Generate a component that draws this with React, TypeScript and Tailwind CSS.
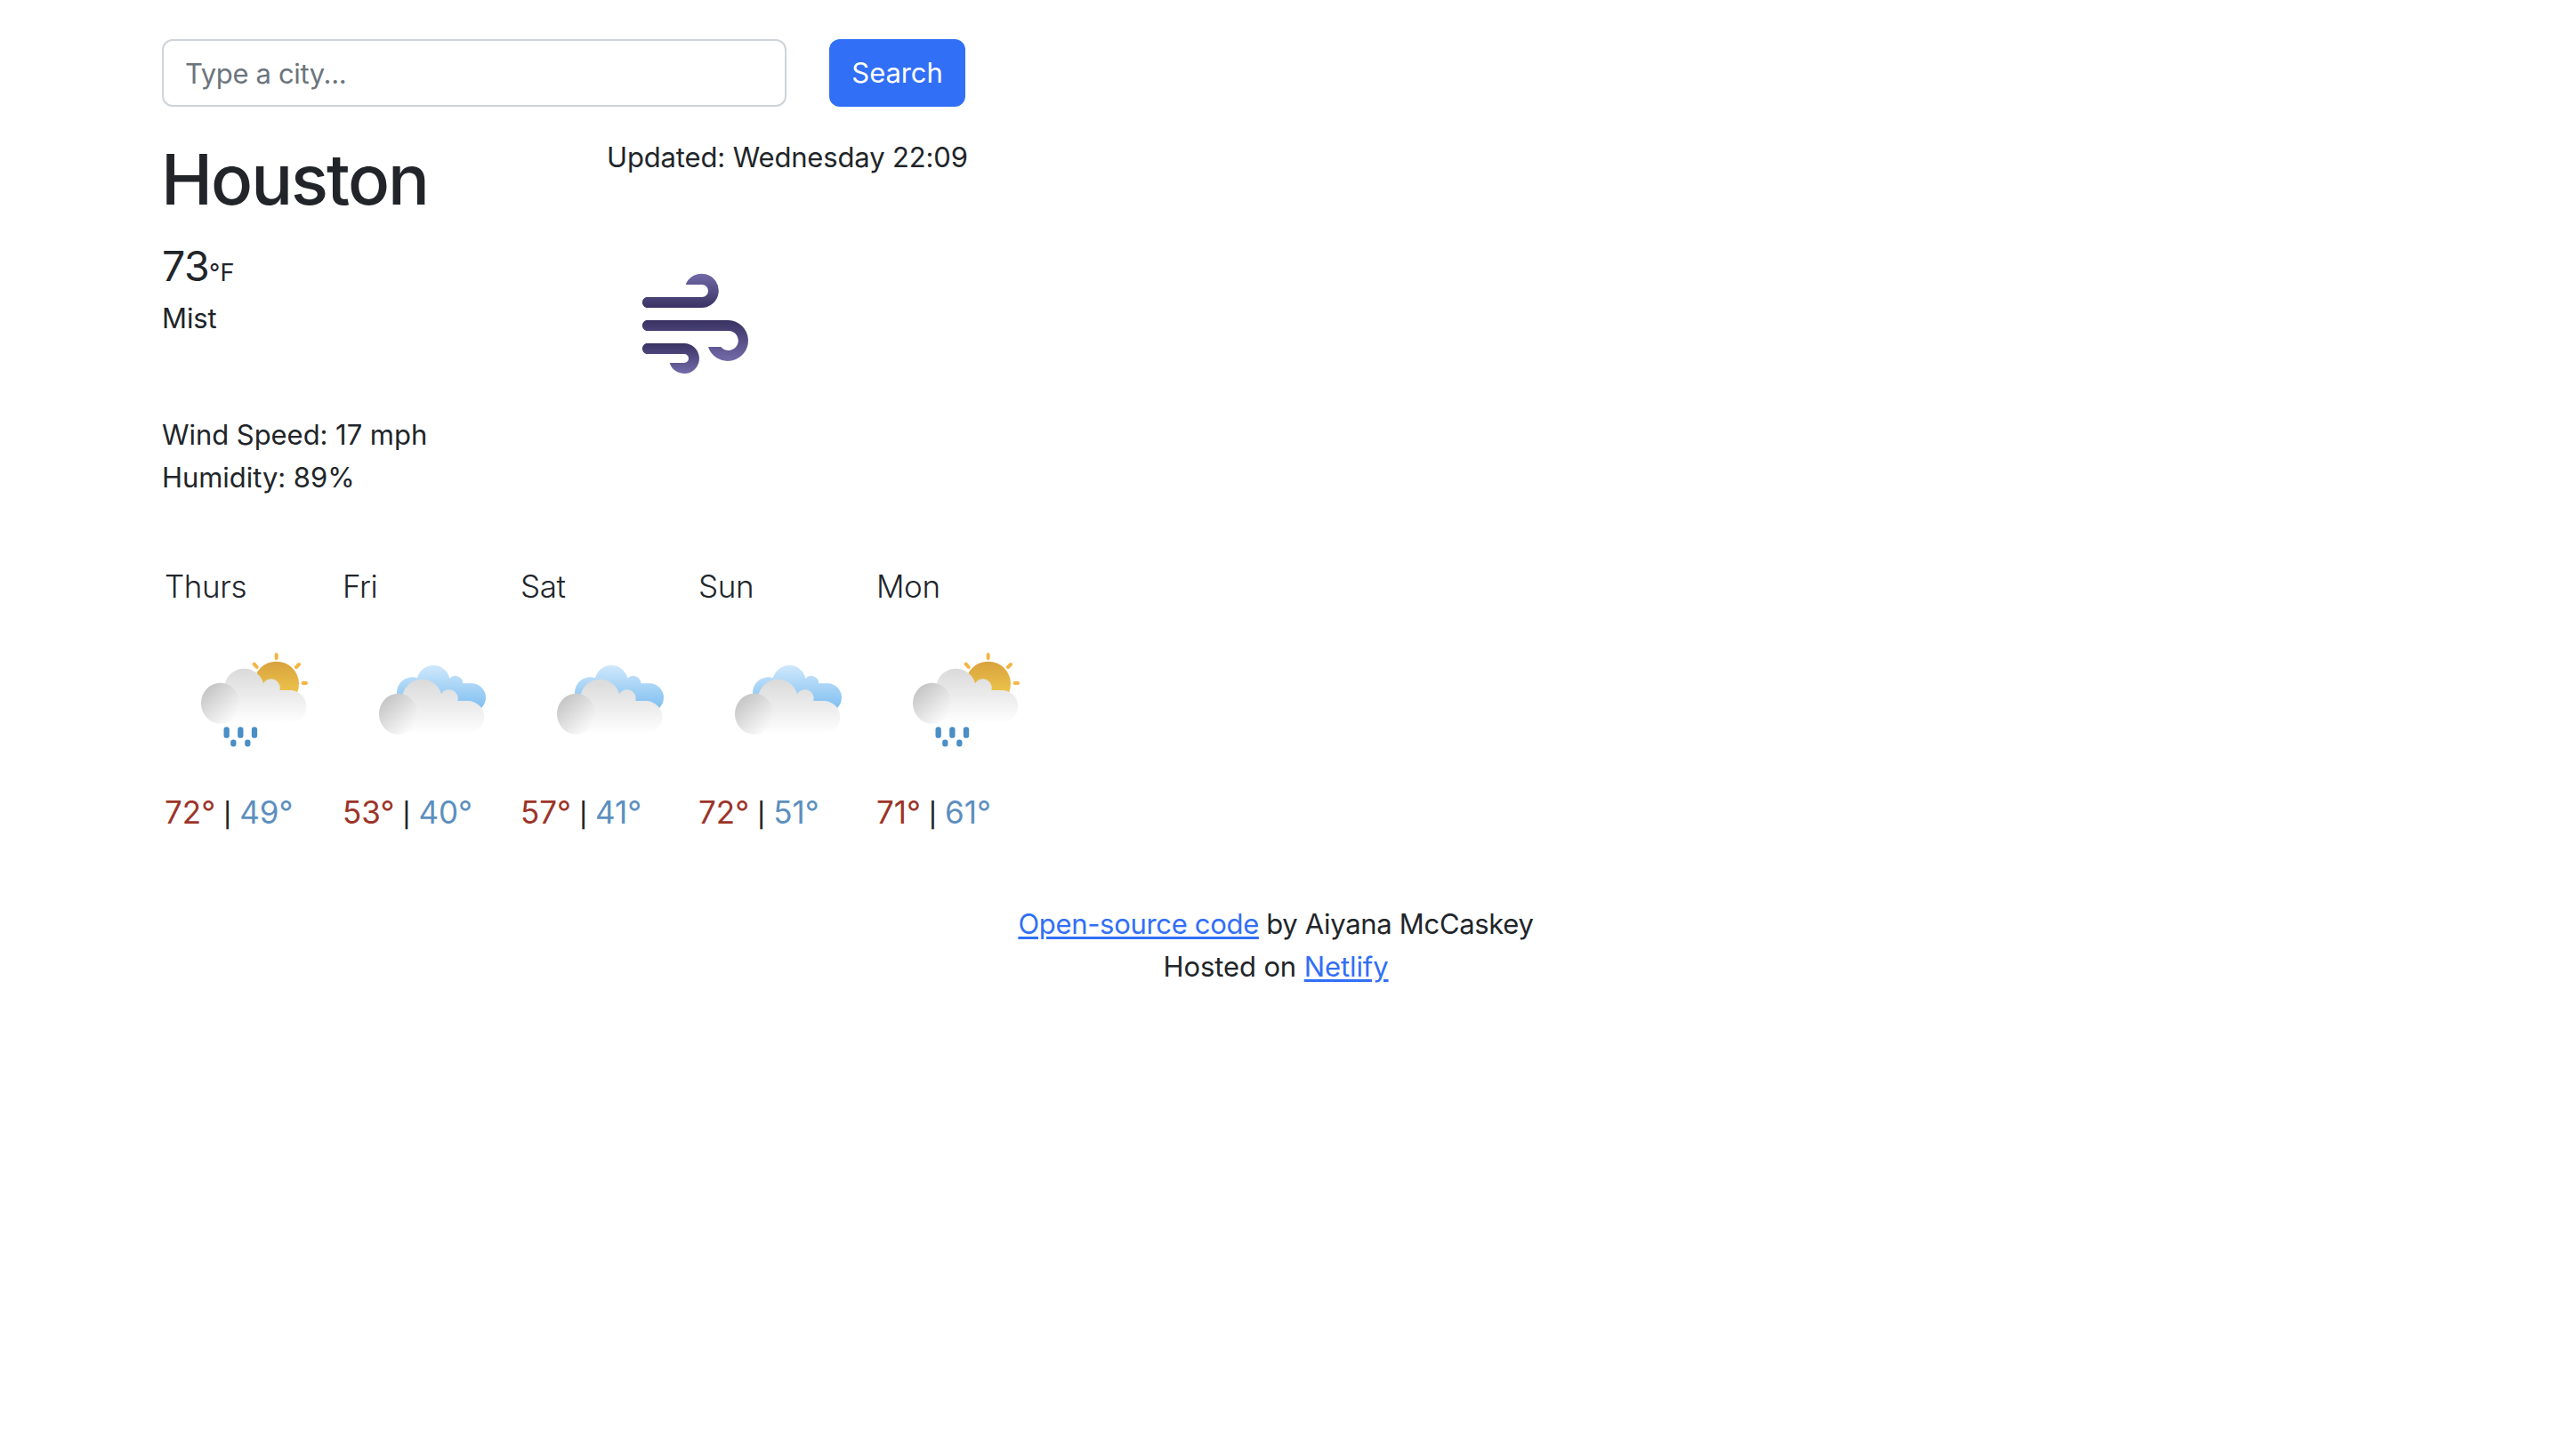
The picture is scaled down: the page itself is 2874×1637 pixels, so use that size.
const forecast = [
  { day: "Thurs", icon: "rain", high: 72, low: 49 },
  { day: "Fri", icon: "clouds", high: 53, low: 40 },
  { day: "Sat", icon: "clouds", high: 57, low: 41 },
  { day: "Sun", icon: "clouds", high: 72, low: 51 },
  { day: "Mon", icon: "rain", high: 71, low: 61 },
];

const WindIcon = () => (
  <svg width="180" height="160" viewBox="0 0 540 480">
    <defs>
      <linearGradient id="wind-up" x1="0" y1="0" x2="0" y2="1">
        <stop offset="0" stopColor="#736ba9" />
        <stop offset="1" stopColor="#393262" />
      </linearGradient>
      <linearGradient id="wind-down" x1="0" y1="0" x2="0" y2="1">
        <stop offset="0" stopColor="#393262" />
        <stop offset="1" stopColor="#736ba9" />
      </linearGradient>
    </defs>
    <path
      fill="url(#wind-up)"
      d="M109 162H297A21 21 0 0 0 297 120H242A57.5 57.5 0 1 1 295 198H109C91 192 91 168 109 162Z"
    />
    <path
      fill="url(#wind-down)"
      d="M109 240H386A69 69 0 1 1 318 330H361A33 33 0 1 0 386 276H109C91 270 91 246 109 240Z"
    />
    <path
      fill="url(#wind-down)"
      d="M109 318H237A51 51 0 1 1 188 384H237A15 15 0 0 0 237 354H109C91 348 91 324 109 318Z"
    />
  </svg>
);

const GrayCloud = ({ id }: { id: string }) => (
  <>
    <defs>
      <linearGradient
        id={`${id}-body`}
        gradientUnits="userSpaceOnUse"
        x1="0"
        y1="96"
        x2="0"
        y2="280"
      >
        <stop offset="0" stopColor="#dadada" />
        <stop offset="0.5" stopColor="#ececec" />
        <stop offset="1" stopColor="#ffffff" />
      </linearGradient>
      <linearGradient id={`${id}-puff`} x1="0.15" y1="0.1" x2="0.8" y2="0.9">
        <stop offset="0" stopColor="#c4c4c4" />
        <stop offset="1" stopColor="#fafafa" />
      </linearGradient>
    </defs>
    <path
      fill={`url(#${id}-body)`}
      d="M116 280V212L127 152A67 67 0 0 1 258 145A30 30 0 0 1 313 168H348A55 55 0 0 1 348 278Z"
    />
    <ellipse cx="113" cy="212" rx="65" ry="69" fill={`url(#${id}-puff)`} />
  </>
);

const RainIcon = ({ id }: { id: string }) => (
  <svg width="150" height="130" viewBox="0 0 450 390">
    <defs>
      <linearGradient id={`${id}-sun`} x1="0" y1="0" x2="0" y2="0.75">
        <stop offset="0" stopColor="#d8a23e" />
        <stop offset="1" stopColor="#eec64b" />
      </linearGradient>
    </defs>
    <g stroke="#f4b544" strokeWidth="12" strokeLinecap="round">
      <path d="M302 48V60M392 144H402M369 90L378 81M227 80L236 90" />
    </g>
    <circle cx="302" cy="147" r="76" fill={`url(#${id}-sun)`} />
    <GrayCloud id={id} />
    <g stroke="#4a8fc6" strokeWidth="19" strokeLinecap="round">
      <path d="M134 301V320M181 301V320M228 301V320M157 344V349M205 344V349" />
    </g>
  </svg>
);

const CloudsIcon = ({ id }: { id: string }) => (
  <svg width="150" height="130" viewBox="0 0 450 390">
    <defs>
      <linearGradient
        id={`${id}-sky`}
        gradientUnits="userSpaceOnUse"
        x1="0"
        y1="83"
        x2="0"
        y2="230"
      >
        <stop offset="0" stopColor="#d0e8fc" />
        <stop offset="1" stopColor="#7fbff0" />
      </linearGradient>
    </defs>
    <path
      fill={`url(#${id}-sky)`}
      d="M160 230A52 52 0 0 1 108 178A52 52 0 0 1 177 127A56 56 0 0 1 286 128A26 26 0 0 1 331 145H360A48 48 0 0 1 360 241Z"
    />
    <g transform="translate(0 36)">
      <GrayCloud id={id} />
    </g>
  </svg>
);

const App = () => {
  return (
    <div className="min-h-[1637px] bg-white pt-11 font-[Inter,sans-serif] text-[31px] leading-[48px] text-[#212529]">
      <div className="pl-[182px]">
        <form className="flex gap-12" onSubmit={(e) => e.preventDefault()}>
          <input
            type="text"
            placeholder="Type a city..."
            className="h-[76px] w-[702px] rounded-xl border-2 border-[#ced4da] px-6 tracking-[-0.35px] placeholder:text-[#6c757d]"
          />
          <button className="h-[76px] w-[153px] rounded-xl bg-[#316ff6] tracking-[-0.1px] text-white">
            Search
          </button>
        </form>

        <div className="mt-[33px] flex">
          <div className="w-[500px]">
            <h1 className="-ml-px pt-px text-[78px] leading-[96px] font-medium tracking-[-2px]">
              Houston
            </h1>
            <div className="mt-[13px] h-[71px] text-[46.5px] leading-[72px] tracking-[-0.6px]">
              73<span className="text-[27px] tracking-normal">°F</span>
            </div>
            <p className="tracking-[-0.1px]">Mist</p>
          </div>
          <div>
            <p className="tracking-[-0.15px]">Updated: Wednesday 22:09</p>
            <div className="mt-[79px] ml-2">
              <WindIcon />
            </div>
          </div>
        </div>

        <div className="mt-[25px] tracking-[-0.05px]">
          <p>Wind Speed: 17 mph</p>
          <p>Humidity: 89%</p>
        </div>

        <div className="mt-[71px] ml-[3px] flex text-[35px] leading-[54px]">
          {forecast.map(({ day, icon, high, low }) => (
            <div key={day} className="w-[200px]">
              <div className="font-light tracking-[-0.4px]">{day}</div>
              <div className="mt-[34px] mb-9 ml-[25px]">
                {icon === "rain" ? <RainIcon id={day} /> : <CloudsIcon id={day} />}
              </div>
              <div className="h-[54px] whitespace-nowrap">
                <span className="text-[#9c3428]">{high}°</span>{" "}
                <span className="-ml-px text-[27px] font-medium">|</span>{" "}
                <span className="-ml-px text-[#5c8fbe]">{low}°</span>
              </div>
            </div>
          ))}
        </div>
      </div>

      <footer className="mt-[75px] pr-1.5 text-center">
        <p className="tracking-[-0.32px]">
          <a
            href="#"
            className="text-[#316ff6] underline decoration-[3px] underline-offset-[3px]"
          >
            Open-source code
          </a>{" "}
          by Aiyana McCaskey
        </p>
        <p className="tracking-[-0.1px]">
          Hosted on{" "}
          <a
            href="#"
            className="text-[#316ff6] underline decoration-[3px] underline-offset-[3px]"
          >
            Netlify
          </a>
        </p>
      </footer>
    </div>
  );
};

export default App;
